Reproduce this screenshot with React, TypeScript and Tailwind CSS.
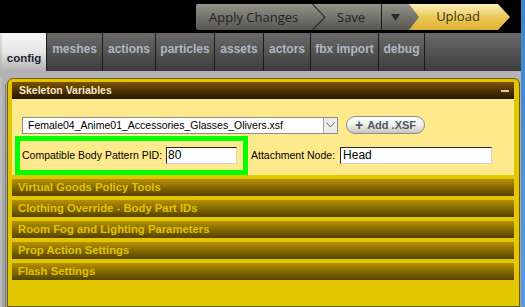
import React from "react";

const tabs: { label: string; w: string }[] = [
  { label: "meshes", w: "w-[56px]" },
  { label: "actions", w: "w-[53px]" },
  { label: "particles", w: "w-[59px]" },
  { label: "assets", w: "w-[49px]" },
  { label: "actors", w: "w-[47px]" },
  { label: "fbx import", w: "w-[68px]" },
  { label: "debug", w: "w-[46px]" },
];

const rows = [
  "Virtual Goods Policy Tools",
  "Clothing Override - Body Part IDs",
  "Room Fog and Lighting Parameters",
  "Prop Action Settings",
  "Flash Settings",
];

export default function App() {
  return (
    <div className="w-[525px] h-[307px] flex overflow-hidden font-['Liberation_Sans',Arial,sans-serif]">
      <div className="w-[521px] flex flex-col">
        {/* top bar */}
        <div className="h-[33px] shrink-0 bg-black flex items-start pt-[4px] pl-[196px]">
          <div className="h-[26px] w-[224px] flex items-center bg-gradient-to-b from-[#93938a] via-[#74746c] to-[#56564f] rounded-l-[2px] text-[#222220] font-['Open_Sans',sans-serif] text-[13px]">
            <span className="w-[116px] pl-[13px] leading-none">Apply Changes</span>
            <svg width="14" height="26" viewBox="0 0 14 26" className="shrink-0">
              <polyline points="0.5,0 13,13 0.5,26" fill="none" stroke="#2c2c29" strokeWidth="1.3" />
              <polyline points="1.8,0 14,12.5" fill="none" stroke="#a4a49a" strokeWidth="0.6" />
            </svg>
            <span className="w-[55px] pl-[11px] leading-none">Save</span>
            <div className="w-px h-full bg-[#1c1c1a]" />
            <div className="w-[27px] flex items-center justify-center">
              <svg width="9" height="7" viewBox="0 0 9 7">
                <polygon points="0,0 9,0 4.5,7" fill="#2a2a28" />
              </svg>
            </div>
          </div>
          <div className="-ml-[11px] h-[26px] w-[101px] flex items-center justify-center pr-[3px] bg-gradient-to-b from-[#f9f0b8] via-[#ecc957] to-[#dfb030] [clip-path:polygon(0_0,89px_0,101px_50%,89px_100%,0_100%,10px_50%)] font-['Open_Sans',sans-serif] text-[13px] text-[#3a3322]">
            Upload
          </div>
        </div>

        {/* tabs */}
        <div className="h-[38px] shrink-0 flex bg-gradient-to-b from-[#6b6b6b] to-[#3d3d3d]">
          <div className="w-[2px] bg-gradient-to-b from-[#e4e4e4] to-[#b4b4b4]" />
          <div className="w-[44px] flex items-end justify-center pb-[4px] bg-gradient-to-b from-[#f6f6f6] via-[#e6e6e6] to-[#b2b2b2] text-[11.5px] font-bold text-[#1c2638]">
            config
          </div>
          {tabs.map((t) => (
            <div
              key={t.label}
              className={`${t.w} border-l border-[#1a1a1a] flex justify-center pt-[9px] text-[12px] leading-[14px] font-bold text-[#abb8c8]`}
            >
              {t.label}
            </div>
          ))}
          <div className="flex-1 border-l border-[#1a1a1a]" />
        </div>

        {/* body */}
        <div className="flex-1 flex bg-gradient-to-b from-[#b3b3b3] to-[#a2a2a2] pt-[7px]">
          <div className="w-[5px] shrink-0 flex">
            <div className="w-[2px] bg-[#bcbcbc]" />
            <div className="w-[3px]" />
          </div>
          <div className="w-[1px] shrink-0 mt-[6px] bg-[#7a7a7a]" />
          <div className="w-[1px] shrink-0" />
          <div className="w-[513px] flex flex-col rounded-t-[6px] border border-[#6b5a12] bg-[#e2c700] pt-[3px] pl-[4px] pr-[5px]">
            {/* header */}
            <div className="h-[17px] shrink-0 flex items-center justify-between pl-[7px] pr-[5px] bg-gradient-to-b from-[#7d5500] to-[#261600]">
              <span className="text-[10.5px] font-bold text-[#f6e8c8] leading-none">Skeleton Variables</span>
              <div className="w-[8px] h-[2px] bg-[#d8ccb0]" />
            </div>
            {/* content */}
            <div className="h-[76px] shrink-0 bg-[#feea8c] pt-[17px]">
              <div className="flex items-center">
                <div className="ml-[10px] w-[316px] h-[17px] flex bg-white border border-[#8d8d8d]">
                  <span className="flex-1 pl-[5px] text-[10.5px] leading-[15px] text-black whitespace-nowrap overflow-hidden">
                    Female04_Anime01_Accessories_Glasses_Olivers.xsf
                  </span>
                  <div className="w-[14px] flex items-center justify-center bg-[#ececec] border-l border-[#a8a8a8]">
                    <svg width="9" height="6" viewBox="0 0 9 6">
                      <polyline points="0.5,0.5 4.5,5 8.5,0.5" fill="none" stroke="#6a6a6a" strokeWidth="1" />
                    </svg>
                  </div>
                </div>
                <div className="ml-[8px] w-[79px] h-[18px] flex items-center justify-center gap-[4px] rounded-full border border-[#8e8e86] bg-gradient-to-b from-[#ffffff] via-[#efefea] to-[#c6c6bd] text-[11px] font-bold text-[#4e5862]">
                  <span className="text-[14px] leading-none">+</span>
                  <span className="leading-none">Add .XSF</span>
                </div>
              </div>
              <div className="flex items-center mt-[2px]">
                <div className="ml-[3px] w-[233px] h-[39px] border-[5px] border-[#00ff00] flex items-center pl-[2px]">
                  <span className="text-[10.5px] text-black whitespace-nowrap">Compatible Body Pattern PID:</span>
                  <div className="ml-auto mr-[6px] w-[71px] h-[17px] bg-white border border-t-[#2a2a2a] border-l-[#2a2a2a] border-b-[#d6d2c8] border-r-[#d6d2c8] pl-[1px] text-[12px] leading-[15px] text-black">
                    80
                  </div>
                </div>
                <span className="ml-[3px] text-[10.5px] text-black whitespace-nowrap">Attachment Node:</span>
                <div className="ml-[5px] w-[152px] h-[17px] bg-white border border-t-[#2a2a2a] border-l-[#2a2a2a] border-b-[#d6d2c8] border-r-[#d6d2c8] pl-[2px] text-[12px] leading-[15px] text-black">
                  Head
                </div>
              </div>
            </div>
            {/* rows */}
            <div className="flex flex-col gap-[4px] mt-[4px]">
              {rows.map((r) => (
                <div
                  key={r}
                  className="h-[17px] flex items-center pl-[6px] bg-gradient-to-b from-[#b89200] to-[#554300] text-[11.3px] font-bold text-[#e0c400] leading-none"
                >
                  {r}
                </div>
              ))}
            </div>
          </div>
        </div>
      </div>
      <div className="w-[4px] bg-gradient-to-b from-[#3d83cf] to-[#5a9de0]" />
    </div>
  );
}
